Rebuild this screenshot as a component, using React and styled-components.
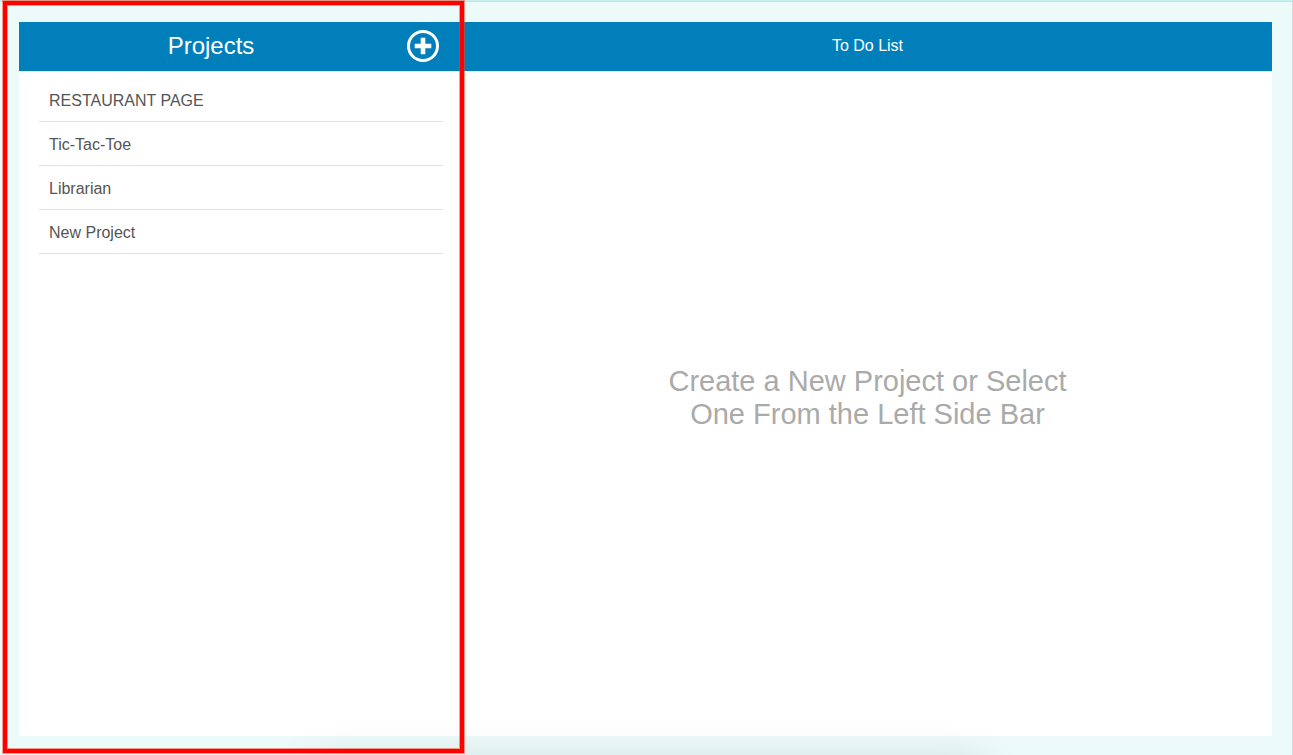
import React from "react";
import styled, { createGlobalStyle } from "styled-components";

const GlobalStyle = createGlobalStyle`
  *, *::before, *::after { box-sizing: border-box; }
  body {
    margin: 0;
    background: #edfafa;
    color: #555;
    font-family: "Liberation Sans", Arial, sans-serif;
    font-size: 16px;
  }
`;

const Page = styled.div`
  position: relative;
  display: flex;
  min-height: 100vh;
  padding: 22px 21px 19px 19px;
  box-shadow: inset 0 1px #c2f1ef, inset 0 2px #d3dfdf, inset -1px 0 #d6dcdc;
  overflow: hidden;
`;

const Board = styled.div`
  flex: 1;
  display: grid;
  grid-template-columns: minmax(240px, 444fr) 809fr;
  background: #fff;
`;

const Sidebar = styled.aside`
  position: relative;
`;

const Main = styled.main`
  display: flex;
  flex-direction: column;
`;

const Header = styled.header`
  display: flex;
  align-items: center;
  gap: 4px;
  height: 50px;
  padding: 0 ${(p) => (p.$withAction ? "24px" : "0")} 2px 0;
  background: #007fbb;
  border-bottom: 1px solid #d4f4f6;
  color: #fff;
`;

const Title = styled.h1`
  flex: 1;
  margin: 0;
  font-size: 24px;
  font-weight: 400;
  line-height: 28px;
  text-align: center;
`;

const Subtitle = styled.h2`
  flex: 1;
  margin: 0;
  font-size: 16px;
  font-weight: 400;
  line-height: 20px;
  text-align: center;
`;

const AddButton = styled.button`
  display: flex;
  width: 32px;
  height: 32px;
  padding: 0;
  border: 0;
  background: none;
  color: inherit;
  cursor: pointer;
`;

const ProjectList = styled.ul`
  margin: 0;
  padding: 6px 20px;
  list-style: none;
`;

const ProjectItem = styled.li`
  border-bottom: 1px solid #cdebe8;
`;

const ProjectButton = styled.button`
  display: block;
  width: 100%;
  height: 43px;
  padding: 2px 10px 0;
  border: 0;
  background: none;
  color: #555;
  font: inherit;
  text-align: left;
  cursor: pointer;
`;

const EmptyState = styled.div`
  flex: 1;
  display: flex;
  align-items: center;
  justify-content: center;
  padding: 0 20px 12px;
`;

const EmptyText = styled.p`
  max-width: 420px;
  margin: 0;
  color: #aaa;
  font-size: 29px;
  line-height: 33px;
  text-align: center;
`;

const Highlight = styled.div`
  position: absolute;
  inset: -21px -1px -17px -16px;
  border: 4px solid #f00;
  box-shadow: 0 0 0 1px rgba(255, 60, 20, 0.5), inset 0 0 0 1px rgba(255, 60, 20, 0.5);
  pointer-events: none;
  z-index: 2;
`;

const BottomShadow = styled.div`
  position: absolute;
  top: calc(100% + 6px);
  left: 24%;
  right: 24%;
  height: 60px;
  box-shadow: 0 0 40px rgba(0, 0, 0, 0.13);
  pointer-events: none;
`;

const projects = ["RESTAURANT PAGE", "Tic-Tac-Toe", "Librarian", "New Project"];

function PlusIcon() {
  return (
    <svg width="32" height="32" viewBox="0 0 32 32" fill="none" aria-hidden="true">
      <circle cx="16" cy="16" r="14.5" stroke="currentColor" strokeWidth="3" />
      <path
        d="M13.7 7.7h4.6v6h6v4.6h-6v6h-4.6v-6h-6v-4.6h6z"
        fill="currentColor"
      />
    </svg>
  );
}

export default function App() {
  return (
    <>
      <GlobalStyle />
      <Page>
        <Board>
          <Sidebar>
            <Header $withAction>
              <Title>Projects</Title>
              <AddButton type="button" aria-label="Add project">
                <PlusIcon />
              </AddButton>
            </Header>
            <ProjectList>
              {projects.map((name) => (
                <ProjectItem key={name}>
                  <ProjectButton type="button">{name}</ProjectButton>
                </ProjectItem>
              ))}
            </ProjectList>
            <Highlight />
          </Sidebar>
          <Main>
            <Header>
              <Subtitle>To Do List</Subtitle>
            </Header>
            <EmptyState>
              <EmptyText>Create a New Project or Select One From the Left Side Bar</EmptyText>
            </EmptyState>
          </Main>
        </Board>
        <BottomShadow />
      </Page>
    </>
  );
}
